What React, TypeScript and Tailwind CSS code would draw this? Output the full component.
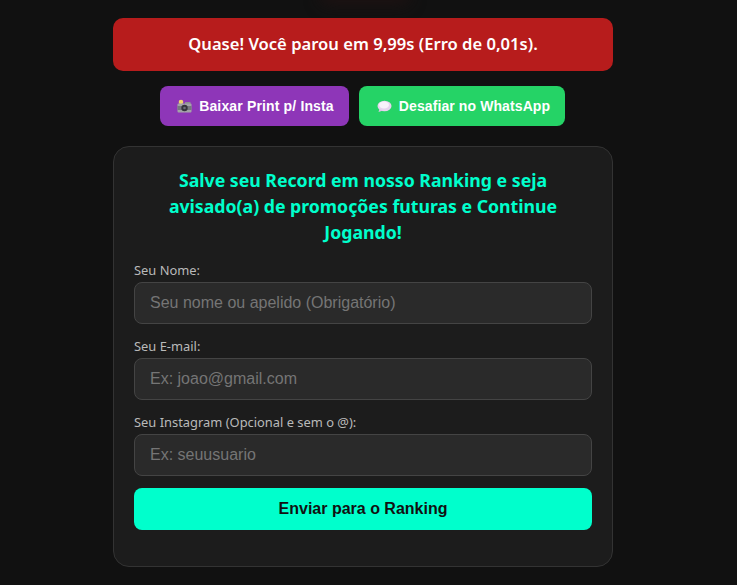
import React from "react";

const Camera = () => (
  <svg width="15" height="14" viewBox="0 0 15 14" className="shrink-0">
    <circle cx="4" cy="3" r="2.3" fill="#f2d36e" />
    <rect x="8" y="3" width="5.5" height="2" fill="#8d8d94" />
    <rect x="0.5" y="4.5" width="14" height="9" rx="1" fill="#a3a3a8" />
    <rect x="0.5" y="7" width="14" height="4" fill="#77777f" />
    <circle cx="7.5" cy="9" r="3.2" fill="#35353c" />
    <circle cx="7.5" cy="9" r="1.3" fill="#6d6d78" />
  </svg>
);

const Bubble = () => (
  <svg width="15" height="13" viewBox="0 0 15 13" className="shrink-0">
    <ellipse cx="7.5" cy="6" rx="7" ry="5.2" fill="#e6d4ee" />
    <ellipse cx="7" cy="5" rx="5" ry="3.4" fill="#f8f2fa" />
    <path d="M2.5 9 L1.5 12 L6 10.5 Z" fill="#dcc8e6" />
  </svg>
);

const Field = ({ label, placeholder }: { label: string; placeholder: string }) => (
  <div className="flex flex-col">
    <label className="h-5 font-['Noto_Sans','Open_Sans',sans-serif] text-[12.9px] leading-[16px] text-[#b9b9b9]">
      {label}
    </label>
    <input
      placeholder={placeholder}
      className="h-[42px] w-full rounded-[8px] border border-[#444444] bg-[#2a2a2a] px-[15px] font-['Liberation_Sans',sans-serif] text-base text-white outline-none placeholder:text-[#757575]"
    />
  </div>
);

export default function App() {
  return (
    <div className="relative flex min-h-[585px] flex-col items-center overflow-hidden bg-[#111111] pr-[11px] pt-[18px]">
      <div className="absolute left-[365px] top-[-12px] h-[16px] w-[90px] -translate-x-1/2 rounded-full bg-[#1f1212] blur-[8px]" />
      <div className="relative flex w-[500px] flex-col items-center">
        <div className="flex h-[53px] w-full items-center justify-center rounded-[10px] bg-[#b71c1c] font-['Noto_Sans','Open_Sans',sans-serif] text-[16.6px] font-semibold text-white">
          Quase! Você parou em 9,99s (Erro de 0,01s).
        </div>

        <div className="mr-[1px] mt-[15px] flex gap-[10px]">
          <button className="flex h-10 w-[189px] items-center justify-center gap-[7px] rounded-[8px] bg-[#8e36b8] pl-[2px] font-['Liberation_Sans',sans-serif] text-sm font-bold tracking-[0.15px] text-white">
            <Camera />
            Baixar Print p/ Insta
          </button>
          <button className="flex h-10 w-[206px] items-center justify-center gap-[7px] rounded-[8px] bg-[#25d366] pl-[3px] font-['Liberation_Sans',sans-serif] text-sm font-bold tracking-[0.1px] text-white">
            <Bubble />
            Desafiar no WhatsApp
          </button>
        </div>

        <div className="mt-5 h-[421px] w-full rounded-[16px] border border-[#333333] bg-[#1c1c1c] px-5 pt-[20px]">
          <h2 className="px-[10px] text-center font-['Noto_Sans','Open_Sans',sans-serif] text-[17.7px] font-bold leading-[26px] text-[#00ffcc]">
            Salve seu Record em nosso Ranking e seja avisado(a) de promoções futuras e Continue Jogando!
          </h2>
          <div className="mt-[17px] flex flex-col gap-[14px]">
            <Field label="Seu Nome:" placeholder="Seu nome ou apelido (Obrigatório)" />
            <Field label="Seu E-mail:" placeholder="Ex: joao@gmail.com" />
            <Field label="Seu Instagram (Opcional e sem o @):" placeholder="Ex: seuusuario" />
          </div>
          <button className="mt-3 h-[42px] w-full rounded-[8px] bg-[#00ffcc] font-['Liberation_Sans',sans-serif] text-base font-bold text-[#111111]">
            Enviar para o Ranking
          </button>
        </div>
      </div>
    </div>
  );
}
